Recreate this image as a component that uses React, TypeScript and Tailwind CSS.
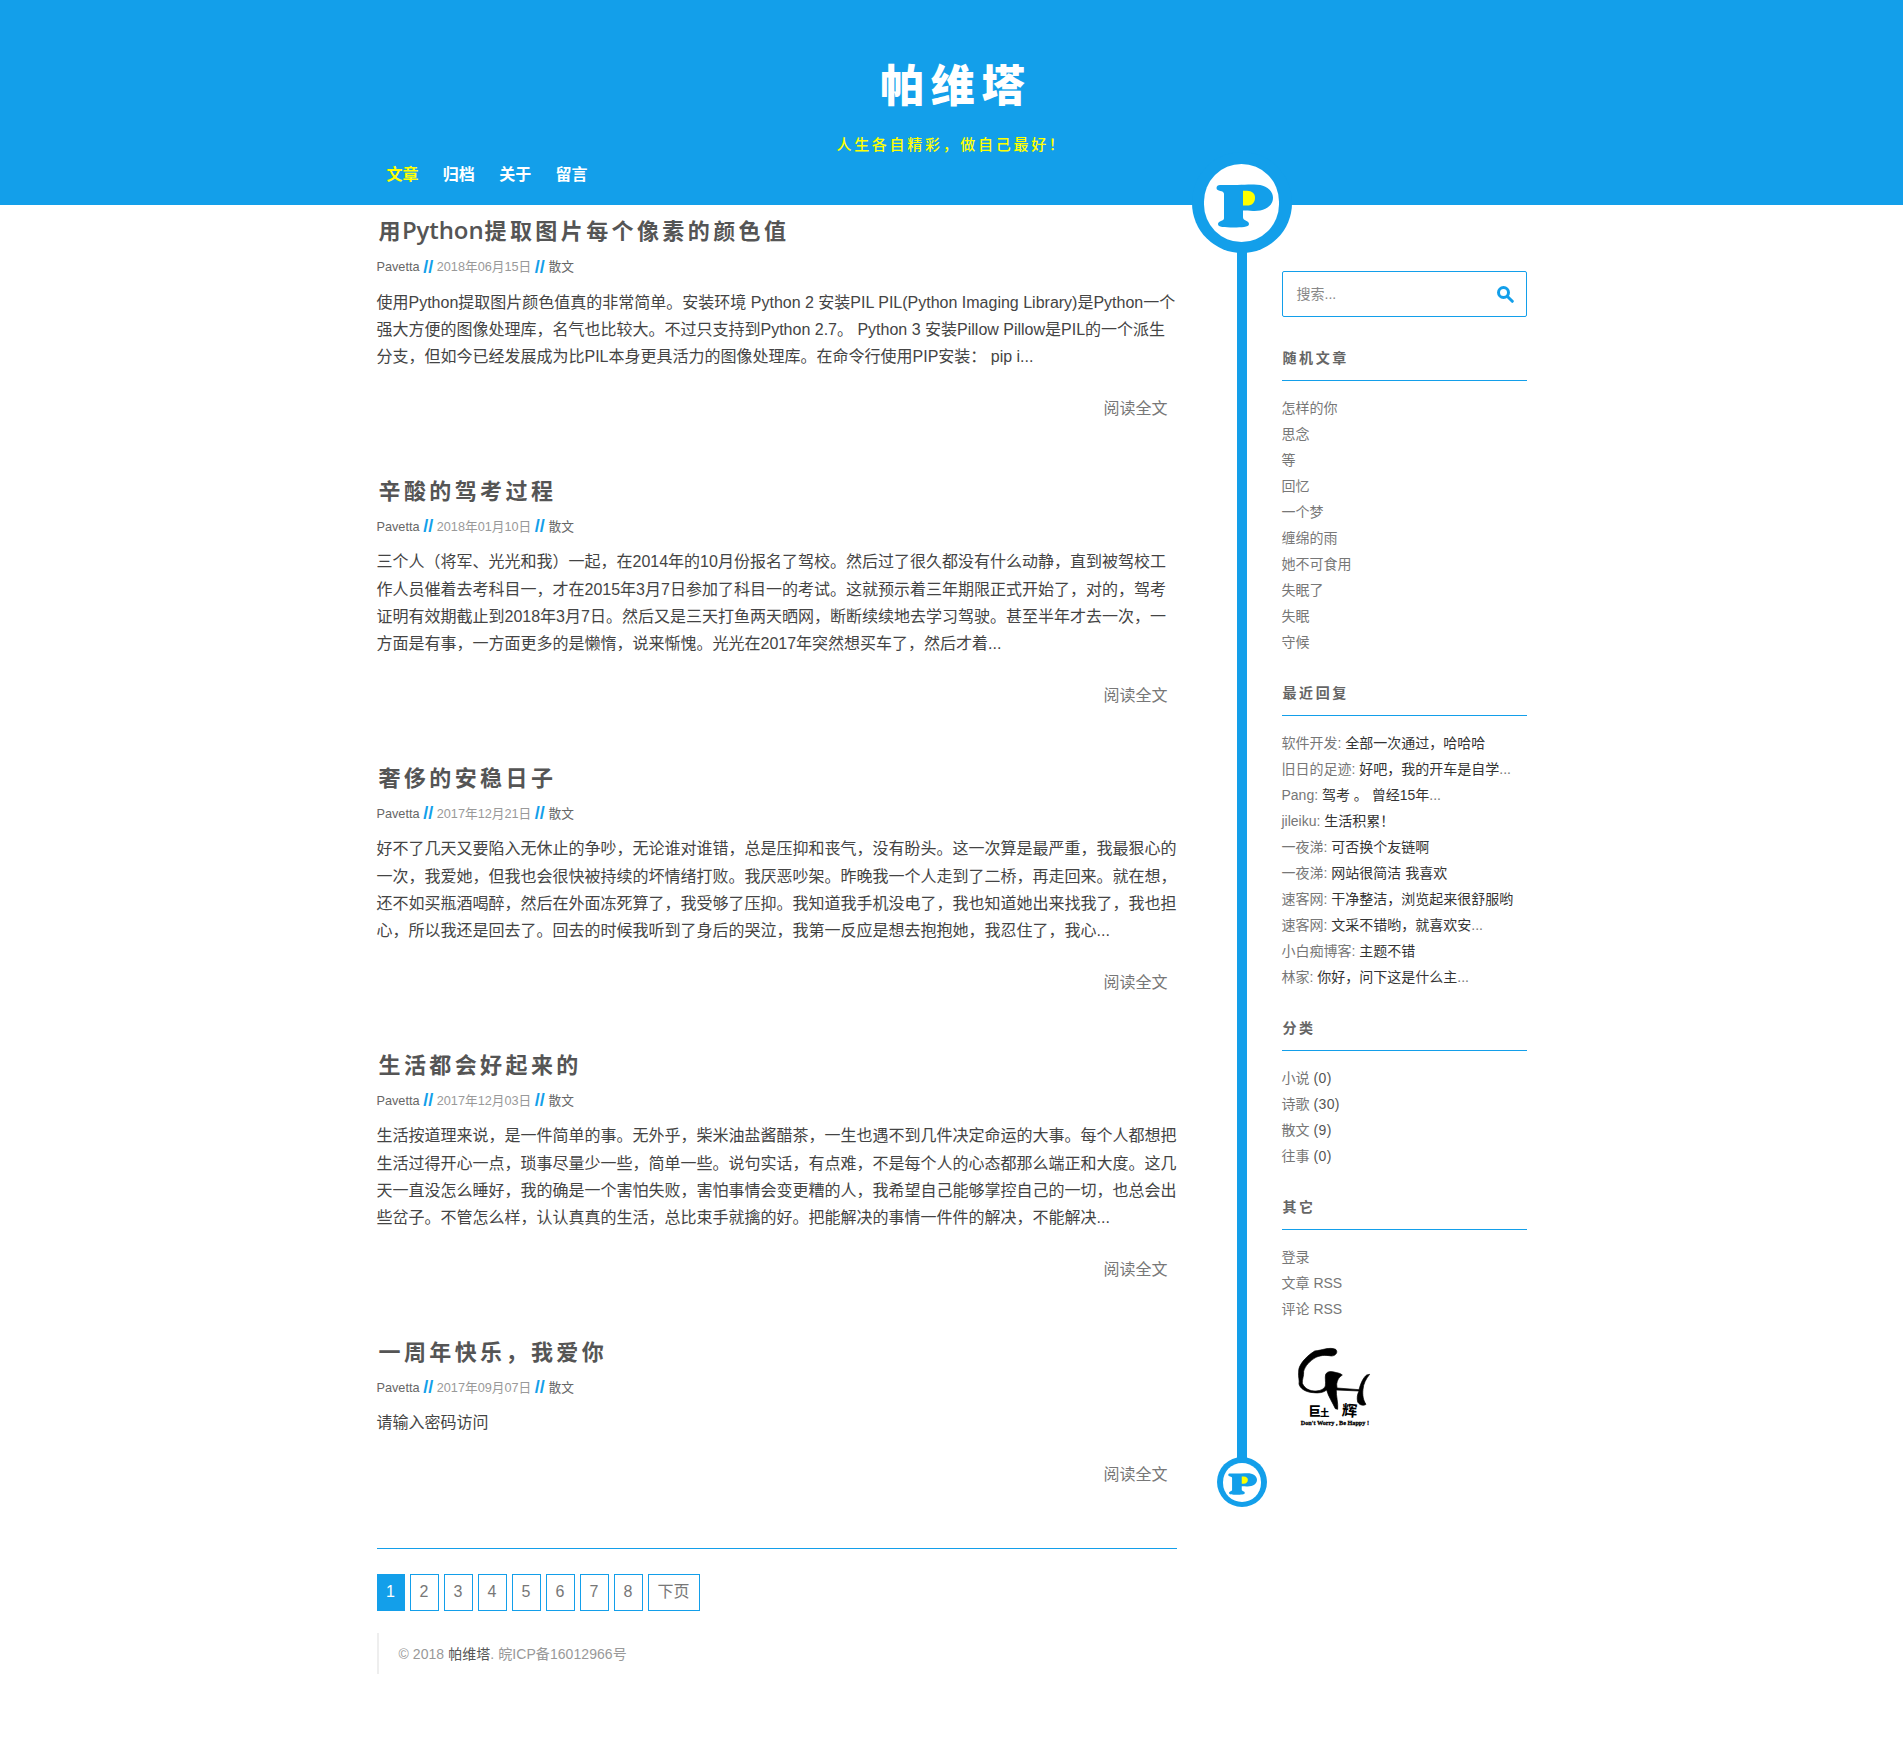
import React from "react";

const BODY_FONT = "font-['Liberation_Sans','Noto_Sans_CJK_SC',sans-serif]";

type Post = { title: React.ReactNode; date: string; lines: string[] };

const posts: Post[] = [
  {
    title: (
      <>
        用<span className="-ml-[2px] mr-[1px] font-['Open_Sans'] text-[24px] font-semibold tracking-[-0.1px]">Python</span>提取图片每个像素的颜色值
      </>
    ),
    date: "2018年06月15日",
    lines: [
      "使用Python提取图片颜色值真的非常简单。安装环境 Python 2 安装PIL PIL(Python Imaging Library)是Python一个",
      "强大方便的图像处理库，名气也比较大。不过只支持到Python 2.7。 Python 3 安装Pillow Pillow是PIL的一个派生",
      "分支，但如今已经发展成为比PIL本身更具活力的图像处理库。在命令行使用PIP安装： pip i...",
    ],
  },
  {
    title: "辛酸的驾考过程",
    date: "2018年01月10日",
    lines: [
      "三个人（将军、光光和我）一起，在2014年的10月份报名了驾校。然后过了很久都没有什么动静，直到被驾校工",
      "作人员催着去考科目一，才在2015年3月7日参加了科目一的考试。这就预示着三年期限正式开始了，对的，驾考",
      "证明有效期截止到2018年3月7日。然后又是三天打鱼两天晒网，断断续续地去学习驾驶。甚至半年才去一次，一",
      "方面是有事，一方面更多的是懒惰，说来惭愧。光光在2017年突然想买车了，然后才着...",
    ],
  },
  {
    title: "奢侈的安稳日子",
    date: "2017年12月21日",
    lines: [
      "好不了几天又要陷入无休止的争吵，无论谁对谁错，总是压抑和丧气，没有盼头。这一次算是最严重，我最狠心的",
      "一次，我爱她，但我也会很快被持续的坏情绪打败。我厌恶吵架。昨晚我一个人走到了二桥，再走回来。就在想，",
      "还不如买瓶酒喝醉，然后在外面冻死算了，我受够了压抑。我知道我手机没电了，我也知道她出来找我了，我也担",
      "心，所以我还是回去了。回去的时候我听到了身后的哭泣，我第一反应是想去抱抱她，我忍住了，我心...",
    ],
  },
  {
    title: "生活都会好起来的",
    date: "2017年12月03日",
    lines: [
      "生活按道理来说，是一件简单的事。无外乎，柴米油盐酱醋茶，一生也遇不到几件决定命运的大事。每个人都想把",
      "生活过得开心一点，琐事尽量少一些，简单一些。说句实话，有点难，不是每个人的心态都那么端正和大度。这几",
      "天一直没怎么睡好，我的确是一个害怕失败，害怕事情会变更糟的人，我希望自己能够掌控自己的一切，也总会出",
      "些岔子。不管怎么样，认认真真的生活，总比束手就擒的好。把能解决的事情一件件的解决，不能解决...",
    ],
  },
  { title: "一周年快乐，我爱你", date: "2017年09月07日", lines: ["请输入密码访问"] },
];

const comments = [
  ["软件开发", "全部一次通过，哈哈哈", ""],
  ["旧日的足迹", "好吧，我的开车是自学", "..."],
  ["Pang", "驾考 。 曾经15年", "..."],
  ["jileiku", "生活积累！", ""],
  ["一夜涕", "可否换个友链啊", ""],
  ["一夜涕", "网站很简洁 我喜欢", ""],
  ["速客网", "干净整洁，浏览起来很舒服哟", ""],
  ["速客网", "文采不错哟，就喜欢安", "..."],
  ["小白痴博客", "主题不错", ""],
  ["林家", "你好，问下这是什么主", "..."],
];

function PMark({ className }: { className: string }) {
  return (
    <svg viewBox="0 0 57 45" className={className} preserveAspectRatio="none">
      <path
        fill="#139fea"
        d="M4 1 C14 1.4 30 0.5 38 0.5 C49 0.5 57 6 57 14 C57 23 48 28 37 27.5 C33 27.4 30 27 27 27 L27 34 C27 38 33 37 33 41 C33 44.5 25 44.5 18 44.5 C8 44.5 2 44.5 2 41 C2 37.5 8 38 8 35 L8 10 C8 6 0.5 8 0.5 4 C0.5 2 2 1 4 1Z"
      />
      <path fill="#ffff00" d="M27 7 L31 7 C36 7 39 10 39 14 C39 19 36 22 31 22 L27 22Z" />
    </svg>
  );
}

function InkLogo() {
  return (
    <svg viewBox="261 35 222 246" className="ml-[15px] mt-[25px] h-[82px] w-[74px]" fill="#000">
      <path d="M377 42 C385 50 378 62 364 62 C352 60 335 58 318 66 C300 76 285 92 281 108 C282 122 276 132 277 144 C284 160 300 168 318 167 C332 166 342 162 346 152 C348 138 344 128 347 117 C352 108 362 107 372 110 C380 113 390 112 397 119 C386 126 382 134 380 146 L381 158 L447 163 C452 144 460 126 470 119 L479 117 C468 130 460 146 459 162 C457 178 459 194 468 207 C460 213 448 209 443 200 C440 188 442 177 447 167 L379 164 C378 182 385 202 383 222 L376 220 C368 202 355 184 350 164 C340 172 326 174 310 172 C288 171 270 160 267 146 C269 134 264 124 266 110 C264 92 284 66 314 47 C336 45 358 34 377 42Z" stroke="#000" strokeWidth="2" />
      <text x="296" y="243" fontSize="36" fontWeight="900" fontFamily="Noto Sans CJK SC, sans-serif">巨</text>
      <text x="330" y="241" fontSize="28" fontWeight="900" fontFamily="Noto Sans CJK SC, sans-serif">土</text>
      <text x="396" y="243" fontSize="46" fontWeight="700" fontFamily="Noto Sans CJK SC, sans-serif" transform="rotate(5 420 228)">辉</text>
      <text x="272" y="270" fontSize="17.5" fontWeight="700" stroke="#000" strokeWidth="0.8" textLength="205" lengthAdjust="spacingAndGlyphs" fontFamily="Liberation Serif, serif">
        Don't Worry , Be Happy !
      </text>
    </svg>
  );
}

function Article({ post }: { post: Post }) {
  return (
    <article className="pb-[42.8px]">
      <h2 className="h-[50px] whitespace-nowrap pl-[2px] font-['Noto_Sans_CJK_SC',sans-serif] text-[22px] font-bold leading-[48px] tracking-[3.4px] text-[#555]">
        {post.title}
      </h2>
      <div className="-mt-px flex h-[28px] items-center gap-[3.6px] whitespace-nowrap text-[12.7px] text-[#999]">
        <span className="text-[#666]">Pavetta</span>
        <b className="-mt-[3px] text-[18px] leading-none text-[#139fea]">//</b>
        <span>{post.date}</span>
        <b className="-mt-[3px] text-[18px] leading-none text-[#139fea]">//</b>
        <span className="text-[#666]">散文</span>
      </div>
      <div className="mt-[6.6px] whitespace-nowrap text-base leading-[27.2px] text-[#444]">
        {post.lines.map((l) => (
          <p key={l}>{l}</p>
        ))}
      </div>
      <div className="mt-[24.8px] h-[27px] pr-[9px] text-right text-base leading-[27px] text-[#777]">阅读全文</div>
    </article>
  );
}

function Widget({ title, children }: { title: string; children: React.ReactNode }) {
  return (
    <section className="mb-[15px]">
      <h3 className="mb-[14px] h-[46px] border-b border-[#139fea] pl-px font-['Noto_Sans_CJK_SC',sans-serif] text-[14px] font-bold leading-[45px] tracking-[2.6px] text-[#666]">
        {title}
      </h3>
      <ul className="whitespace-nowrap text-[14px] leading-[26px] text-[#777]">{children}</ul>
    </section>
  );
}

export default function App() {
  return (
    <div className={`h-[1746px] overflow-hidden bg-white ${BODY_FONT}`}>
      <header className="h-[205px] bg-[#139fea]">
        <div className="mx-auto flex h-full w-[1150px] flex-col">
          <h1 className="mt-[47px] h-[72px] pl-[9px] text-center font-['Noto_Sans_CJK_SC',sans-serif] text-[44px] font-black leading-[72px] tracking-[6.5px] text-white">
            帕维塔
          </h1>
          <p className="mt-[11px] h-[28px] text-center font-['Noto_Sans_CJK_SC',sans-serif] text-[15px] font-medium leading-[28px] tracking-[2.7px] text-[#ffff00]">
            人生各自精彩，做自己最好！
          </p>
          <nav className="mt-[4px] flex gap-[24.3px] pl-[10px] text-base font-bold leading-[26px] text-white">
            <a className="text-[#ffff00]">文章</a>
            <a>归档</a>
            <a>关于</a>
            <a>留言</a>
          </nav>
        </div>
      </header>

      <div className="mx-auto flex w-[1150px]">
        <main className="w-[800px]">
          {posts.map((p) => (
            <Article key={p.date} post={p} />
          ))}
          <div className="mt-[16.4px] border-t border-[#139fea] pt-[25px]">
            <div className="flex gap-[5px] text-base text-[#777]">
              <span className="flex h-[37px] w-[28px] items-center justify-center bg-[#139fea] text-white">1</span>
              {["2", "3", "4", "5", "6", "7", "8"].map((n) => (
                <span key={n} className="flex h-[37px] w-[29px] items-center justify-center border border-[#139fea]">
                  {n}
                </span>
              ))}
              <span className="flex h-[37px] w-[52px] items-center justify-center border border-[#139fea]">下页</span>
            </div>
          </div>
          <footer className="mt-[22px] h-[41px] border-l-2 border-[#eee] pl-[20px] text-[14px] leading-[42px] tracking-[0.06px] text-[#999]">
            © 2018 <span className="text-[#555]">帕维塔</span>. 皖ICP备16012966号
          </footer>
        </main>

        <div className="-mt-[53px] ml-[15px] flex w-[100px] flex-col items-center self-start">
          <div className="flex h-[101px] w-[100px] shrink-0 items-center justify-center rounded-full bg-[#139fea]">
            <div className="flex h-[78px] w-[75px] items-center justify-center rounded-full bg-white">
              <PMark className="ml-[5px] mt-[6px] h-[44px] w-[57px]" />
            </div>
          </div>
          <div className="-my-1 h-[1212px] w-[10px] shrink-0 bg-[#139fea]" />
          <div className="flex size-[50px] shrink-0 items-center justify-center rounded-full bg-[#139fea]">
            <div className="flex h-[39px] w-[38px] items-center justify-center rounded-full bg-white">
              <PMark className="ml-[2px] mt-[3px] h-[22px] w-[29px]" />
            </div>
          </div>
        </div>

        <aside className="-ml-[10px] mt-[66px] w-[245px] shrink-0">
          <div className="mb-[18px] flex h-[46px] items-center justify-between rounded-[2px] border border-[#139fea] pl-[14px] pr-[12px] text-[14px] text-[#888]">
            <span>搜索...</span>
            <svg viewBox="0 0 17 17" className="size-[17px]" fill="none" stroke="#139fea">
              <circle cx="6.5" cy="6.5" r="5" strokeWidth="3" />
              <path d="M10.2 10.2 L15.3 15.3" strokeWidth="3" strokeLinecap="round" />
            </svg>
          </div>
          <Widget title="随机文章">
            {["怎样的你", "思念", "等", "回忆", "一个梦", "缠绵的雨", "她不可食用", "失眠了", "失眠", "守候"].map((t) => (
              <li key={t}>{t}</li>
            ))}
          </Widget>
          <Widget title="最近回复">
            {comments.map(([who, text, dots]) => (
              <li key={who + text}>
                {who}: <span className="text-[#333]">{text}</span>
                {dots}
              </li>
            ))}
          </Widget>
          <Widget title="分类">
            {[
              ["小说", "(0)"],
              ["诗歌", "(30)"],
              ["散文", "(9)"],
              ["往事", "(0)"],
            ].map(([t, n]) => (
              <li key={t}>
                {t} <span className="tracking-[0.4px] text-[#555]">{n}</span>
              </li>
            ))}
          </Widget>
          <Widget title="其它">
            <li>登录</li>
            <li>文章 RSS</li>
            <li>评论 RSS</li>
          </Widget>
          <InkLogo />
        </aside>
      </div>
    </div>
  );
}
